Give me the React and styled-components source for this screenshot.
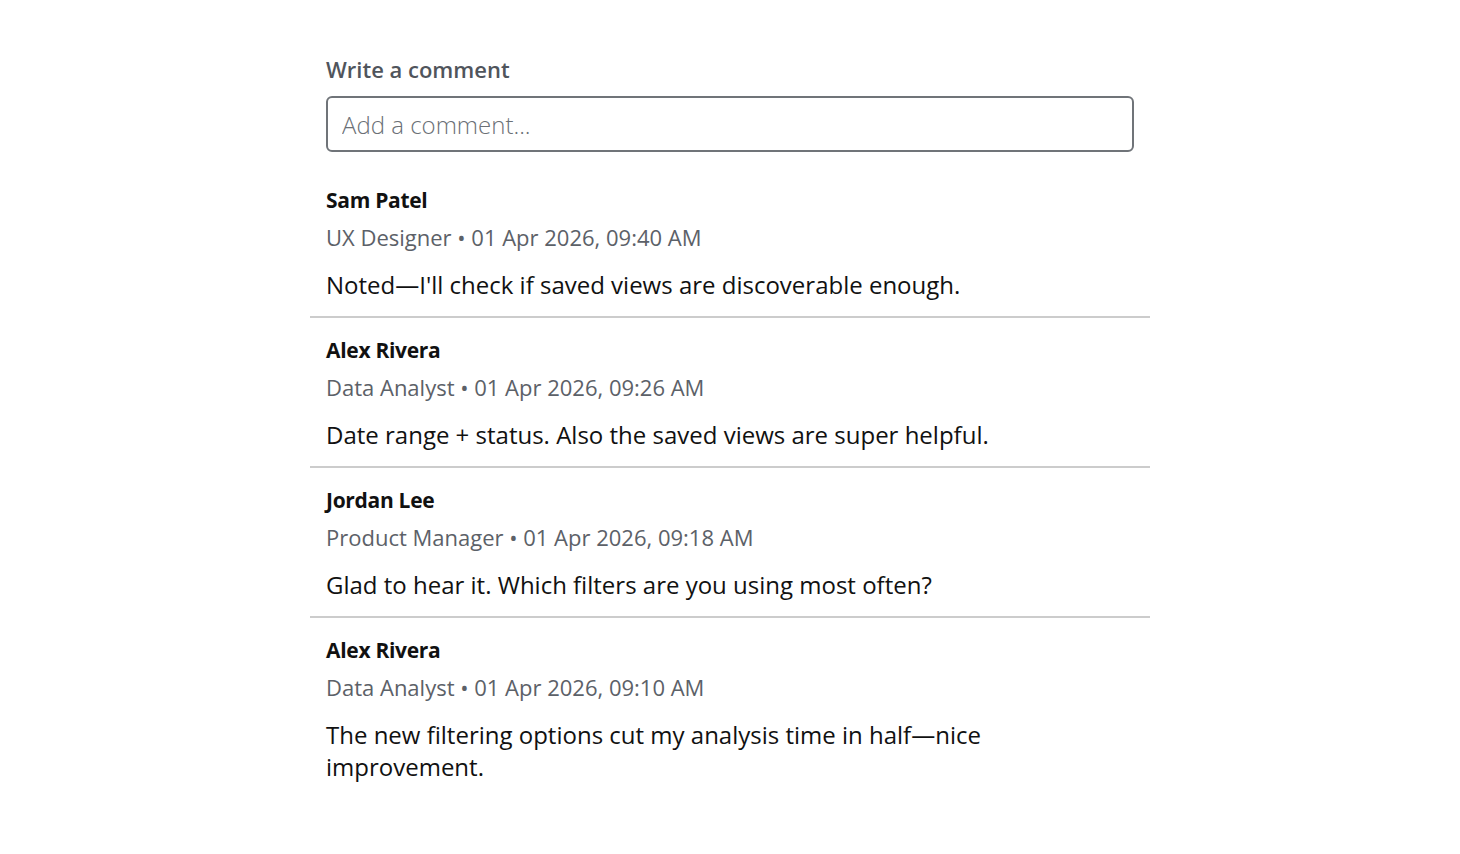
import React from "react";
import styled, { createGlobalStyle } from "styled-components";

const GlobalStyle = createGlobalStyle`
  html, body {
    margin: 0;
    padding: 0;
    background: #ffffff;
  }
  body {
    font-family: "Open Sans", "Liberation Sans", sans-serif;
    color: #111111;
  }
`;

const Panel = styled.section`
  width: 840px;
  margin: 0 auto;
  padding-top: 55px;
  box-sizing: border-box;
`;

const Composer = styled.div`
  padding: 0 16px;
`;

const Label = styled.label`
  display: block;
  font-size: 22px;
  font-weight: 600;
  line-height: 28px;
  color: #50555c;
  margin-bottom: 13px;
`;

const Input = styled.input`
  display: block;
  width: 100%;
  height: 56px;
  box-sizing: border-box;
  border: 2px solid #707479;
  border-radius: 6px;
  padding: 0 14px;
  font-family: "Open Sans", "Liberation Sans", sans-serif;
  font-size: 24px;
  font-weight: 300;
  color: #111;
  outline: none;
  &::placeholder {
    color: #6b7076;
    font-weight: 300;
  }
`;

const List = styled.ul`
  list-style: none;
  margin: 16px 0 0;
  padding: 0;
`;

const Item = styled.li`
  padding: 18px 16px 15px;
  border-bottom: ${(p) => (p.$last ? "none" : "2px solid #cccccc")};
`;

const Name = styled.div`
  font-size: 21px;
  font-weight: 700;
  letter-spacing: -0.3px;
  line-height: 28px;
  color: #111;
  margin-bottom: 9px;
`;

const Meta = styled.div`
  font-size: 22px;
  line-height: 28px;
  color: #5c6168;
  margin-bottom: 18px;
`;

const Body = styled.p`
  margin: 0;
  font-size: 24px;
  line-height: 32px;
  color: #111;
  max-width: 680px;
`;

const comments = [
  {
    name: "Sam Patel",
    role: "UX Designer",
    time: "01 Apr 2026, 09:40 AM",
    text: "Noted—I'll check if saved views are discoverable enough.",
  },
  {
    name: "Alex Rivera",
    role: "Data Analyst",
    time: "01 Apr 2026, 09:26 AM",
    text: "Date range + status. Also the saved views are super helpful.",
  },
  {
    name: "Jordan Lee",
    role: "Product Manager",
    time: "01 Apr 2026, 09:18 AM",
    text: "Glad to hear it. Which filters are you using most often?",
  },
  {
    name: "Alex Rivera",
    role: "Data Analyst",
    time: "01 Apr 2026, 09:10 AM",
    text: "The new filtering options cut my analysis time in half—nice improvement.",
  },
];

export default function App() {
  return (
    <>
      <GlobalStyle />
      <Panel>
        <Composer>
          <Label htmlFor="comment">Write a comment</Label>
          <Input id="comment" placeholder="Add a comment..." />
        </Composer>
        <List>
          {comments.map((c, i) => (
            <Item key={i} $last={i === comments.length - 1}>
              <Name>{c.name}</Name>
              <Meta>
                {c.role} • {c.time}
              </Meta>
              <Body>{c.text}</Body>
            </Item>
          ))}
        </List>
      </Panel>
    </>
  );
}
